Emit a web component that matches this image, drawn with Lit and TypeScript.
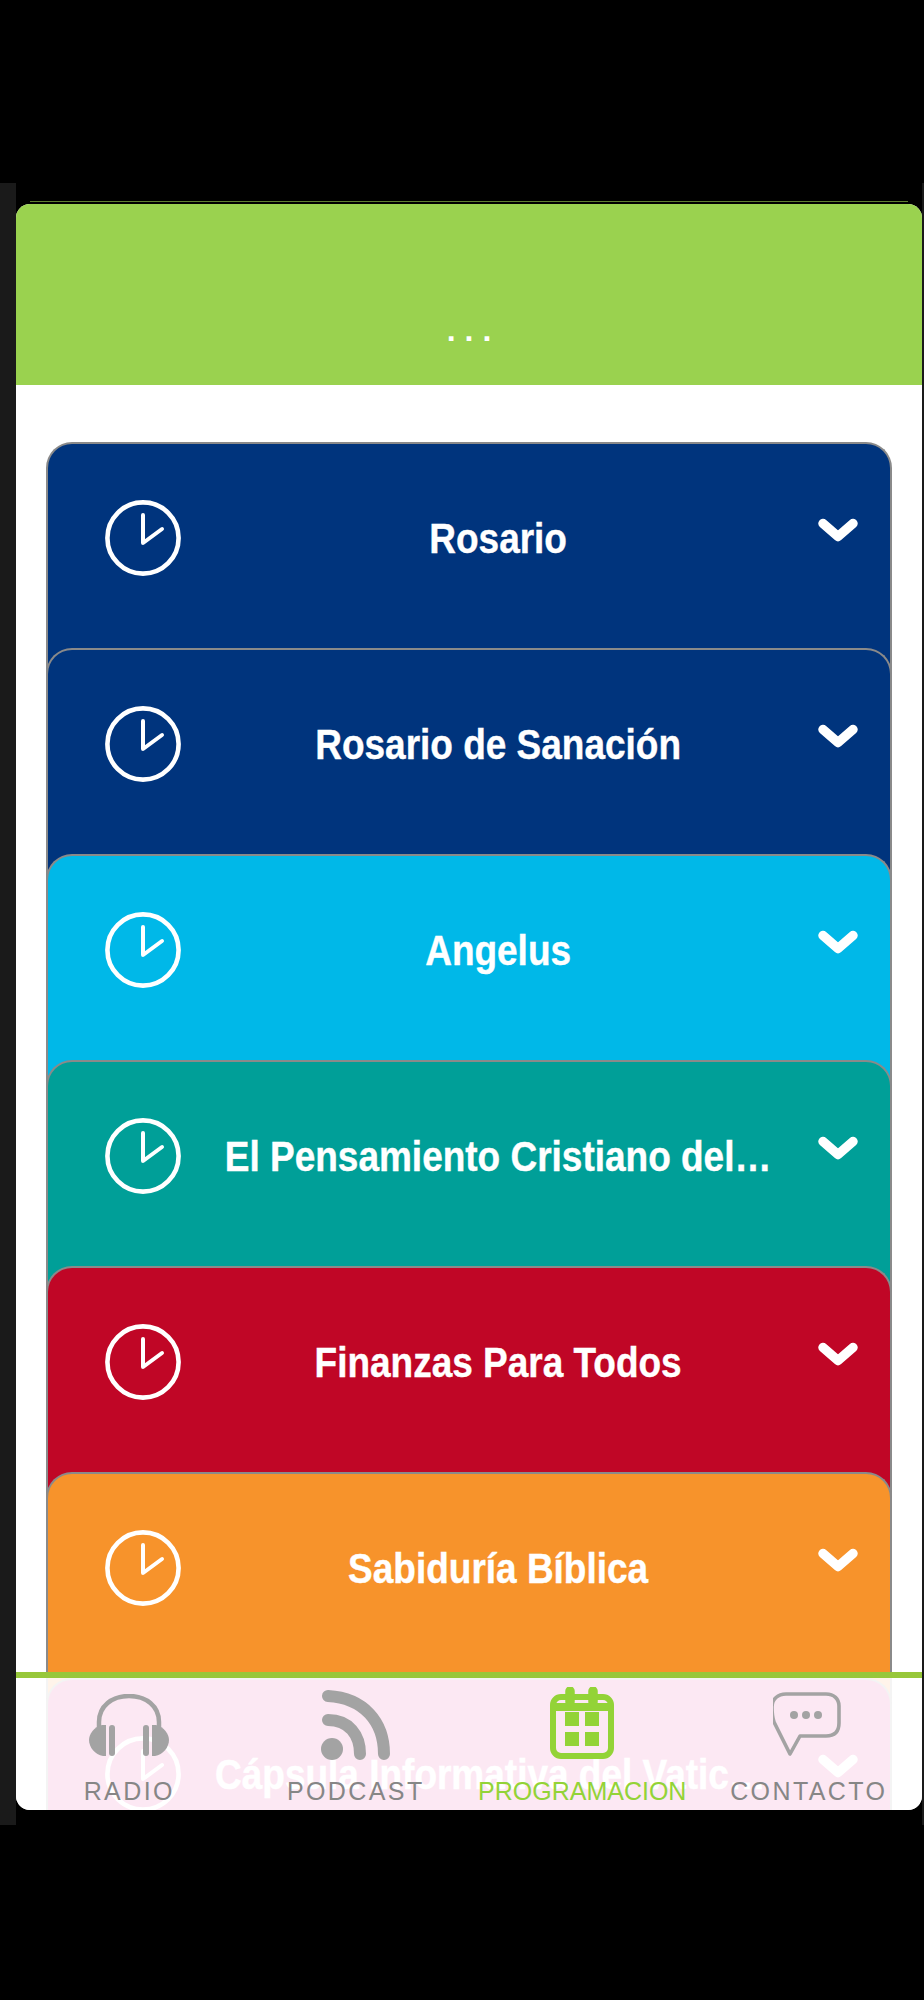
import { LitElement, html, css, svg } from "lit";
import { customElement } from "lit/decorators.js";

const ITEMS = [
  { title: "Rosario", color: "#00347d" },
  { title: "Rosario de Sanación", color: "#00347d" },
  { title: "Angelus", color: "#00b8e8" },
  { title: "El Pensamiento Cristiano del…", color: "#009f98" },
  { title: "Finanzas Para Todos", color: "#c00626" },
  { title: "Sabiduría Bíblica", color: "#f7932b" },
  { title: "Cápsula Informativa del Vaticano en Español", color: "#e11a87" },
];

const clock = svg`<circle cx="38" cy="38" r="35.6" fill="none" stroke="#fff" stroke-width="4.6"/><path d="M38 15V43L57 29" fill="none" stroke="#fff" stroke-width="4" stroke-linecap="round" stroke-linejoin="round"/>`;
const chevron = svg`<path d="M5 5.5L20 18.5L35 5.5" fill="none" stroke="#fff" stroke-width="9.5" stroke-linecap="round" stroke-linejoin="round"/>`;

const TABS = [
  {
    label: "RADIO",
    box: "0 0 80 62",
    w: 80,
    h: 62,
    icon: svg`<path d="M10 36V28C10 12 23 2 40 2C57 2 70 12 70 28V36" fill="none" stroke="#a3a3a3" stroke-width="4.5"/>
      <path d="M17 31H13C5 33 0 40 0 46C0 53 6 61 14 62H17Z" fill="#a3a3a3"/><rect x="20" y="31" width="6" height="31" rx="3" fill="#a3a3a3"/>
      <path d="M63 31H67C75 33 80 40 80 46C80 53 74 61 66 62H63Z" fill="#a3a3a3"/><rect x="54" y="31" width="6" height="31" rx="3" fill="#a3a3a3"/>`,
  },
  {
    label: "PODCAST",
    box: "0 0 70 70",
    w: 70,
    h: 70,
    icon: svg`<circle cx="11" cy="59" r="11" fill="#a3a3a3"/><path d="M7 30C28 30 39 45 39 64" fill="none" stroke="#a3a3a3" stroke-width="12" stroke-linecap="round"/><path d="M7 6C43 8 63 32 63 64" fill="none" stroke="#a3a3a3" stroke-width="12" stroke-linecap="round"/>`,
  },
  {
    label: "PROGRAMACION",
    active: true,
    box: "0 0 64 76",
    w: 64,
    h: 76,
    icon: svg`<rect x="3" y="10" width="58" height="59" rx="8" fill="none" stroke="#93d337" stroke-width="6"/>
      <path d="M3 16H61V24H3Z" fill="#93d337"/>
      <path d="M20 4V15M43 4V15" stroke="#93d337" stroke-width="9.5" stroke-linecap="round"/>
      <rect x="15" y="25" width="14" height="14" fill="#93d337"/><rect x="35" y="25" width="14" height="14" fill="#93d337"/><rect x="15" y="45" width="14" height="14" fill="#93d337"/><rect x="35" y="45" width="14" height="14" fill="#93d337"/>`,
  },
  {
    label: "CONTACTO",
    box: "3 0 71 67",
    w: 71,
    h: 67,
    icon: svg`<path d="M16 2H56C64 2 69 7 69 14V31C69 40 64 44 56 44H30L20 62L4 30C3 27 2 20 2 15C2 7 8 2 16 2Z" fill="none" stroke="#a3a3a3" stroke-width="3.6" stroke-linejoin="round"/>
      <circle cx="24" cy="23" r="4" fill="#a3a3a3"/><circle cx="36" cy="23" r="4" fill="#a3a3a3"/><circle cx="48" cy="23" r="4" fill="#a3a3a3"/>`,
  },
];

@customElement("app-root")
export class AppRoot extends LitElement {
  static styles = css`
    :host {
      display: block;
      width: 924px;
      height: 2000px;
      background: #000;
      overflow: hidden;
      font-family: "Liberation Sans", Arial, sans-serif;
    }
    .device {
      margin-top: 183px;
      height: 1642px;
      box-sizing: border-box;
      padding: 0 2px 0 16px;
      background: #1a1a1a;
      display: flex;
    }
    .bezel {
      flex: 1;
      min-width: 0;
      background: #000;
      padding: 18px 0 15px;
      display: flex;
      flex-direction: column;
    }
    .edge {
      flex: none;
      height: 1px;
      margin: 0 14px 2px;
      background: #5f8030;
    }
    .screen {
      flex: 1;
      min-height: 0;
      position: relative;
      background: #fff;
      border-radius: 14px;
      overflow: hidden;
    }
    .header {
      height: 181px;
      box-sizing: border-box;
      background: #9ad24f;
      color: #fff;
      font-size: 32px;
      font-weight: 700;
      line-height: 40px;
      letter-spacing: 9px;
      text-align: center;
      padding: 106px 0 0 9px;
    }
    .list {
      padding: 57px 30px 0;
    }
    .card {
      height: 206px;
    }
    .card-body {
      height: 300px;
      box-sizing: border-box;
      border: 2px solid #8a8a8a;
      border-bottom: 0;
      border-radius: 26px 26px 0 0;
      padding: 56px 32px 0 57px;
      display: flex;
      align-items: flex-start;
      color: #fff;
    }
    .clock {
      width: 76px;
      height: 76px;
      flex: none;
    }
    .title-box {
      flex: 1;
      min-width: 0;
      margin: 0 37px 0 34px;
      display: flex;
      justify-content: center;
    }
    .title {
      flex: none;
      width: 116.3%;
      transform: scaleX(0.86);
      font-weight: 700;
      font-size: 43px;
      line-height: 76px;
      text-align: center;
      white-space: nowrap;
      overflow: hidden;
      text-overflow: ellipsis;
      -webkit-text-stroke: 0.4px #fff;
    }
    .chev {
      width: 40px;
      height: 24px;
      flex: none;
      margin-top: 18px;
    }
    .tabbar {
      position: absolute;
      left: 0;
      right: 0;
      bottom: 0;
      height: 138px;
      box-sizing: border-box;
      background: rgba(255, 255, 255, 0.9);
      border-top: 6px solid #9ccf3e;
      border-image: linear-gradient(#97c73a, #a8da4e) 1;
      display: grid;
      grid-template-columns: repeat(4, 1fr);
    }
    .tab {
      display: flex;
      flex-direction: column;
      align-items: center;
      min-width: 0;
    }
    .icon-slot {
      height: 94px;
      display: flex;
      align-items: center;
      justify-content: center;
    }
    .label {
      margin-top: 4px;
      font-size: 25px;
      line-height: 30px;
      letter-spacing: 2.4px;
      color: #868686;
      white-space: nowrap;
    }
    .tab.active .label {
      letter-spacing: 0;
      color: #93d337;
    }
  `;

  render() {
    return html`
      <div class="device">
        <div class="bezel">
          <div class="edge"></div>
          <div class="screen">
            <div class="header">...</div>
            <div class="list">
              ${ITEMS.map(
                (it) => html`
                  <div class="card">
                    <div class="card-body" style="background:${it.color}">
                      <svg class="clock" viewBox="0 0 76 76">${clock}</svg>
                      <div class="title-box"><div class="title">${it.title}</div></div>
                      <svg class="chev" viewBox="0 0 40 24">${chevron}</svg>
                    </div>
                  </div>
                `
              )}
            </div>
            <div class="tabbar">
              ${TABS.map(
                (t) => html`
                  <div class="tab ${t.active ? "active" : ""}">
                    <div class="icon-slot">
                      <svg width=${t.w} height=${t.h} viewBox=${t.box}>${t.icon}</svg>
                    </div>
                    <div class="label">${t.label}</div>
                  </div>
                `
              )}
            </div>
          </div>
        </div>
      </div>
    `;
  }
}
